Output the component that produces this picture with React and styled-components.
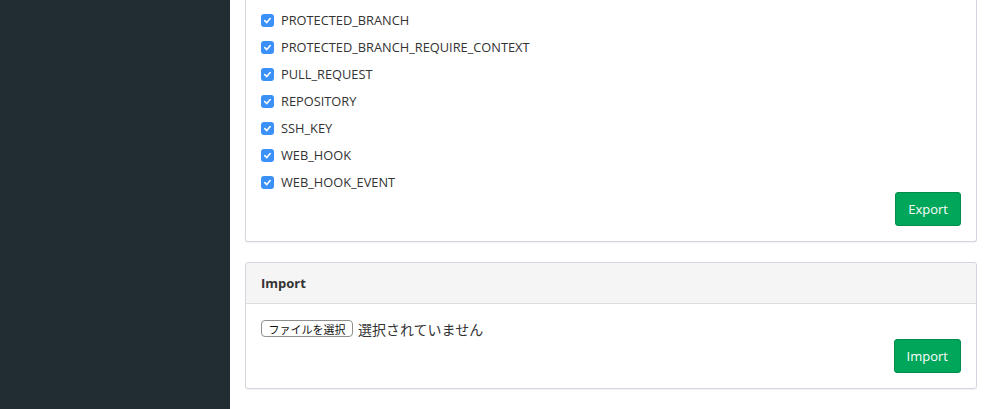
import React from "react";
import styled, { createGlobalStyle } from "styled-components";

const Global = createGlobalStyle`
  html, body { margin: 0; padding: 0; background: #fff; }
  body { font-family: "Open Sans", "Noto Sans CJK JP", sans-serif; color: #333; }
  * { box-sizing: border-box; }
`;

const Layout = styled.div`
  display: flex;
  min-height: 409px;
`;

const Sidebar = styled.aside`
  width: 230px;
  flex: 0 0 230px;
  background: #222d32;
`;

const Main = styled.main`
  flex: 1;
  padding: 0 15px;
  display: flex;
  flex-direction: column;
  gap: 20px;
`;

const Card = styled.section`
  background: #fff;
  border: 1px solid #d2d6de;
  border-top: ${(p) => (p.$cut ? "none" : "1px solid #d2d6de")};
  border-radius: ${(p) => (p.$cut ? "0 0 3px 3px" : "3px")};
  box-shadow: 0 1px 1px rgba(0, 0, 0, 0.05);
`;

const CardHeader = styled.div`
  height: 41px;
  padding: 0 15px;
  display: flex;
  align-items: center;
  background: #f5f5f5;
  border-bottom: 1px solid #dddddd;
  border-radius: 3px 3px 0 0;
  font-size: 13px;
  font-weight: 700;
  color: #333;
`;

const CardBody = styled.div`
  padding: ${(p) => p.$pad || "15px"};
  display: flex;
  flex-direction: column;
`;

const List = styled.div`
  display: flex;
  flex-direction: column;
  gap: 7px;
`;

const Row = styled.label`
  display: flex;
  align-items: center;
  height: 20px;
  font-size: 12.8px;
  color: #333;
  gap: 7px;
`;

const Box = styled.span`
  width: 13px;
  height: 13px;
  border-radius: 3px;
  background: #3b91f7;
  display: inline-flex;
  align-items: center;
  justify-content: center;
  flex: 0 0 13px;
`;

const Actions = styled.div`
  display: flex;
  justify-content: flex-end;
`;

const Button = styled.button`
  height: 34px;
  padding: 0 12px;
  background: #00a65a;
  border: 1px solid #008d4c;
  border-radius: 3px;
  color: #fff;
  font-family: "Open Sans", sans-serif;
  font-size: 13px;
  cursor: pointer;
`;

const FileRow = styled.div`
  display: flex;
  align-items: center;
  gap: 5px;
  height: 17px;
  margin-bottom: 2px;
`;

const FileButton = styled.span`
  height: 17px;
  width: 92px;
  border: 1px solid #8f8f8f;
  border-radius: 4px;
  background: #fff;
  display: inline-flex;
  align-items: center;
  justify-content: center;
  font-family: "Noto Sans CJK JP", sans-serif;
  font-size: 11px;
  color: #111;
`;

const FileText = styled.span`
  font-family: "Noto Sans CJK JP", sans-serif;
  font-size: 14px;
  color: #333;
`;

const items = [
  "PROTECTED_BRANCH",
  "PROTECTED_BRANCH_REQUIRE_CONTEXT",
  "PULL_REQUEST",
  "REPOSITORY",
  "SSH_KEY",
  "WEB_HOOK",
  "WEB_HOOK_EVENT",
];

const Check = () => (
  <Box>
    <svg width="9" height="9" viewBox="0 0 10 10">
      <path d="M2 5.2 L4.2 7.3 L8 2.8" fill="none" stroke="#fff" strokeWidth="1.8" strokeLinecap="round" strokeLinejoin="round" />
    </svg>
  </Box>
);

export default function App() {
  return (
    <>
      <Global />
      <Layout>
        <Sidebar />
        <Main>
          <Card $cut>
            <CardBody $pad="10px 15px 15px">
              <List>
                {items.map((t) => (
                  <Row key={t}>
                    <Check />
                    {t}
                  </Row>
                ))}
              </List>
              <Actions>
                <Button>Export</Button>
              </Actions>
            </CardBody>
          </Card>
          <Card>
            <CardHeader>Import</CardHeader>
            <CardBody $pad="16px 15px 15px">
              <FileRow>
                <FileButton>ファイルを選択</FileButton>
                <FileText>選択されていません</FileText>
              </FileRow>
              <Actions>
                <Button>Import</Button>
              </Actions>
            </CardBody>
          </Card>
        </Main>
      </Layout>
    </>
  );
}
